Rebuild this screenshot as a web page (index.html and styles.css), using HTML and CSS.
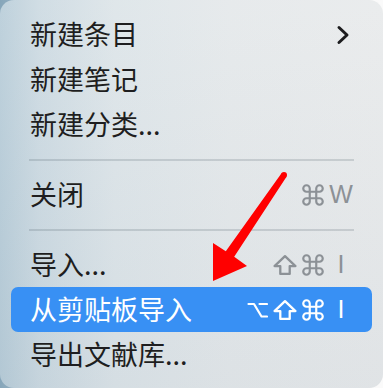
FILE: index.html
```html
<!DOCTYPE html>
<html lang="zh-CN">
<head>
<meta charset="utf-8">
<link rel="stylesheet" href="styles.css">
</head>
<body>
<div class="menu">
  <div class="item"><span class="label">新建条目</span>
    <svg class="chev" width="14" height="20" viewBox="0 0 14 20"><path d="M3 2.5 L11 10 L3 17.5" fill="none" stroke="#1c1c1e" stroke-width="3" stroke-linecap="round" stroke-linejoin="round"/></svg>
  </div>
  <div class="item"><span class="label">新建笔记</span></div>
  <div class="item"><span class="label">新建分类...</span></div>
  <div class="sep"></div>
  <div class="item"><span class="label">关闭</span>
    <span class="keys">
      <span class="k"><svg class="ico cmd" width="26" height="26" viewBox="0 0 24 24"><path d="M15 6v12a3 3 0 1 0 3-3H6a3 3 0 1 0 3 3V6a3 3 0 1 0-3 3h12a3 3 0 1 0-3-3"/></svg></span>
      <span class="k let">W</span>
    </span>
  </div>
  <div class="sep"></div>
  <div class="item"><span class="label">导入...</span>
    <span class="keys">
      <span class="k"><svg class="ico" width="26" height="22" viewBox="0 0 24 21"><path d="M12 2 L22 11.5 H16.5 V19 H7.5 V11.5 H2 Z"/></svg></span>
      <span class="k"><svg class="ico cmd" width="26" height="26" viewBox="0 0 24 24"><path d="M15 6v12a3 3 0 1 0 3-3H6a3 3 0 1 0 3 3V6a3 3 0 1 0-3 3h12a3 3 0 1 0-3-3"/></svg></span>
      <span class="k let">I</span>
    </span>
  </div>
  <div class="item active"><span class="label">从剪贴板导入</span>
    <span class="keys">
      <span class="k"><svg class="ico" width="21" height="18" viewBox="0 0 21 18"><path d="M1.5 3 H7 L14.5 15.5 H20 M12.5 3 H20"/></svg></span>
      <span class="k"><svg class="ico" width="26" height="22" viewBox="0 0 24 21"><path d="M12 2 L22 11.5 H16.5 V19 H7.5 V11.5 H2 Z"/></svg></span>
      <span class="k"><svg class="ico cmd" width="26" height="26" viewBox="0 0 24 24"><path d="M15 6v12a3 3 0 1 0 3-3H6a3 3 0 1 0 3 3V6a3 3 0 1 0-3 3h12a3 3 0 1 0-3-3"/></svg></span>
      <span class="k let">I</span>
    </span>
  </div>
  <div class="item"><span class="label">导出文献库...</span></div>
  <svg class="arrow" width="383" height="388" viewBox="0 0 383 388">
    <circle cx="284" cy="175" r="3" fill="#ff0000"/>
    <polygon points="281.5,173.3 225.8,251.2 213,243 213,281 247,266 234.2,256.8 286.5,176.7" fill="#ff0000"/>
  </svg>
</div>
</body>
</html>
```
FILE: styles.css
```css
html, body {
  margin: 0;
  padding: 0;
}
body {
  width: 383px;
  height: 388px;
  overflow: hidden;
  background: linear-gradient(to right, #86a6ba 0%, #a9bfcc 10%, #f4f4f4 70%, #fafafa 100%);
  font-family: "Noto Sans CJK SC", "Noto Sans", sans-serif;
}
.menu {
  position: relative;
  box-sizing: border-box;
  width: 383px;
  height: 388px;
  border-radius: 14px;
  padding: 12px 11px 11px;
  display: flex;
  flex-direction: column;
  background:
    linear-gradient(to bottom, rgba(255,255,255,0.10), rgba(120,140,160,0.07)),
    linear-gradient(to right, #b7ccd8 0%, #cbd9e1 10%, #dce4e8 30%, #e4e8ea 60%, #e8eaeb 100%);
}
.item {
  height: 45px;
  flex: none;
  display: flex;
  align-items: center;
  padding: 0 17px 0 19px;
  border-radius: 7px;
  color: #1e1e20;
  font-size: 27px;
}
.label {
  flex: 1;
  line-height: 1;
  white-space: nowrap;
  margin-top: -2px;
}
.chev {
  margin-right: 5px;
  display: block;
}
.keys {
  display: flex;
  align-items: center;
  color: #8c9196;
}
.k {
  width: 28px;
  height: 26px;
  display: flex;
  align-items: center;
  justify-content: center;
  line-height: 1;
}
.ico {
  display: block;
  flex: none;
  fill: none;
  stroke: currentColor;
  stroke-width: 2.2;
  stroke-linecap: round;
  stroke-linejoin: round;
}
.cmd {
  stroke-width: 2;
}
.let {
  font-family: "Liberation Sans", sans-serif;
  font-size: 25px;
}
.active {
  background: #3890f4;
  color: #ffffff;
}
.active .keys {
  color: #ffffff;
}
.sep {
  height: 25px;
  flex: none;
  display: flex;
  align-items: center;
  padding: 0 18px;
}
.sep::before {
  content: "";
  display: block;
  width: 100%;
  height: 2px;
  background: rgba(60, 75, 90, 0.18);
}
.arrow {
  position: absolute;
  left: 0;
  top: 0;
  pointer-events: none;
}
```
